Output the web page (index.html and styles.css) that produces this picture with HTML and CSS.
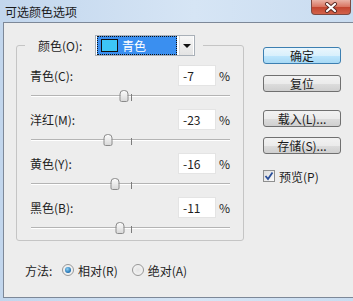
FILE: index.html
```html
<!DOCTYPE html>
<html lang="zh-CN">
<head>
    <meta charset="UTF-8">
    <title>可选颜色选项</title>
    <link rel="stylesheet" href="styles.css">
</head>
<body>
    <div class="window">
        <div class="titlebar">
            <span class="title">可选颜色选项</span>
            <span class="close">
                <svg width="16" height="11" viewBox="0 0 16 11">
                    <path d="M4 2 L12 9 M12 2 L4 9" stroke="#5a2a24" stroke-width="4" stroke-linecap="round"/>
                    <path d="M4 2 L12 9 M12 2 L4 9" stroke="#fff" stroke-width="2.2" stroke-linecap="round"/>
                </svg>
            </span>
        </div>
        <div class="client">
            <div class="main">
                <fieldset class="group">
                    <legend class="group-head">
                        <div class="head-inner">
                            <span class="head-label">颜色(O):</span>
                            <span class="select">
                                <span class="select-value"><span class="swatch"></span>青色</span>
                                <span class="select-arrow"></span>
                            </span>
                        </div>
                    </legend>

                    <div class="row">
                        <div class="row-top">
                            <span class="label">青色(C):</span>
                            <span class="field">-7</span>
                            <span class="pct">%</span>
                        </div>
                        <div class="slider">
                            <div class="track"><span class="tick"></span><span class="thumb" style="left: 46.5%"></span></div>
                        </div>
                    </div>

                    <div class="row">
                        <div class="row-top">
                            <span class="label">洋红(M):</span>
                            <span class="field">-23</span>
                            <span class="pct">%</span>
                        </div>
                        <div class="slider">
                            <div class="track"><span class="tick"></span><span class="thumb" style="left: 38.5%"></span></div>
                        </div>
                    </div>

                    <div class="row">
                        <div class="row-top">
                            <span class="label">黄色(Y):</span>
                            <span class="field">-16</span>
                            <span class="pct">%</span>
                        </div>
                        <div class="slider">
                            <div class="track"><span class="tick"></span><span class="thumb" style="left: 42%"></span></div>
                        </div>
                    </div>

                    <div class="row">
                        <div class="row-top">
                            <span class="label">黑色(B):</span>
                            <span class="field">-11</span>
                            <span class="pct">%</span>
                        </div>
                        <div class="slider">
                            <div class="track"><span class="tick"></span><span class="thumb" style="left: 44.5%"></span></div>
                        </div>
                    </div>
                </fieldset>

                <div class="method">
                    <span class="method-label">方法:</span>
                    <span class="radio checked"></span>
                    <span class="radio-text">相对(R)</span>
                    <span class="radio"></span>
                    <span class="radio-text">绝对(A)</span>
                </div>
            </div>

            <div class="side">
                <button class="btn default">确定</button>
                <button class="btn btn-reset">复位</button>
                <button class="btn btn-load">载入(L)...</button>
                <button class="btn btn-save">存储(S)...</button>
                <div class="preview">
                    <span class="checkbox">
                        <svg width="10" height="10" viewBox="0 0 10 10">
                            <path d="M1.5 5 L4 8 L8.5 1.5" fill="none" stroke="#2a4f9a" stroke-width="1.8"/>
                        </svg>
                    </span>
                    <span>预览(P)</span>
                </div>
            </div>
        </div>
    </div>
</body>
</html>
```

FILE: styles.css
```css
* {
    box-sizing: border-box;
}

body {
    margin: 0;
    font-family: "Noto Sans CJK SC", "Noto Sans", sans-serif;
    font-size: 12px;
    color: #1e1e1e;
}

/* Rahmen des Fensters */
.window {
    width: 353px;
    height: 301px;
    padding: 0 0 3px 3px;
    display: flex;
    flex-direction: column;
    background: linear-gradient(to right, #c2d6ed, #d6e5f5 55%, #c9dcf0);
}

.titlebar {
    height: 22px;
    flex-shrink: 0;
    display: flex;
    align-items: flex-start;
}

.title {
    padding: 4px 0 0 2px;
    line-height: 16px;
    color: #1a1a1a;
}

.close {
    margin-left: auto;
    margin-right: 2px;
    width: 40px;
    height: 15px;
    display: flex;
    align-items: center;
    justify-content: center;
    border: 1px solid #7e4a42;
    border-top: none;
    border-radius: 0 0 4px 4px;
    background: linear-gradient(#eab3a6, #d8735f 50%, #c2452f 51%, #d2624a);
}

.client {
    flex: 1;
    display: flex;
    background: #ededed;
    border: 1px solid #7d8898;
    border-right: none;
}

.main {
    width: 240px;
    padding: 12px 0 0 12px;
}

/* Gruppe */
.group {
    width: 228px;
    min-width: 0;
    margin: 0;
    padding: 9px 13px 0 13px;
    border: 1px solid #c5c5c5;
    border-radius: 3px;
}

.group-head {
    margin-left: -5px;
    padding: 0 8px 0 13px;
}

.head-inner {
    display: flex;
    align-items: center;
    height: 21px;
}

.head-label {
    width: 57px;
}

.select {
    display: flex;
    align-items: center;
    width: 100px;
    height: 21px;
    padding: 0 1px;
    background: #fff;
    border: 1px solid #a9b0b8;
}

.select-value {
    display: flex;
    align-items: center;
    width: 80px;
    height: 19px;
    padding-left: 3px;
    color: #fff;
    background: #3a8ff0;
    border: 1px dotted #111;
}

.swatch {
    width: 17px;
    height: 13px;
    margin-right: 4px;
    background: #3dc6f6;
    border: 1px solid #111;
}

.select-arrow {
    width: 14px;
    height: 19px;
    margin-left: 2px;
    display: flex;
    align-items: center;
    justify-content: center;
    background: linear-gradient(#f7f7f7, #e3e3e3);
    border-left: 1px solid #d8d8d8;
}

.select-arrow::after {
    content: "";
    border-left: 4px solid transparent;
    border-right: 4px solid transparent;
    border-top: 4px solid #111;
}

.row-top {
    display: flex;
    align-items: center;
    height: 21px;
}

.label {
    flex: 1;
}

.field {
    width: 38px;
    height: 21px;
    padding: 0 4px;
    line-height: 19px;
    background: #fff;
    border: 1px solid #e4e4e4;
}

.pct {
    width: 14px;
    text-align: right;
}

.slider {
    height: 23px;
    padding: 9px 0 0 1px;
}

.row:last-child .slider {
    height: 22px;
}

.track {
    position: relative;
    height: 2px;
    border-top: 1px solid #b4b4b4;
    border-bottom: 1px solid #fff;
}

.tick {
    position: absolute;
    left: 50%;
    top: -2px;
    width: 1px;
    height: 7px;
    background: #7c7c7c;
}

.thumb {
    position: absolute;
    top: -6px;
    width: 9px;
    height: 12px;
    transform: translateX(-50%);
    border: 1px solid #8a8a8a;
    border-radius: 4px 4px 2px 2px;
    background: linear-gradient(#fbfbfb, #d9d9d9);
}

/* Methode */
.method {
    display: flex;
    align-items: center;
    height: 18px;
    margin-top: 20px;
    padding-left: 9px;
}

.method-label {
    width: 37px;
}

.radio {
    width: 12px;
    height: 12px;
    margin-right: 4px;
    border: 1px solid #979797;
    border-radius: 50%;
    background: radial-gradient(circle, #e4e4e4, #f8f8f8);
    display: flex;
    align-items: center;
    justify-content: center;
}

.radio.checked::after {
    content: "";
    width: 6px;
    height: 6px;
    border-radius: 50%;
    background: radial-gradient(circle at 40% 35%, #8fd2f5, #1f6fb0 70%);
}

.radio-text {
    margin-right: 14px;
}

/* Knoepfe */
.side {
    padding: 24px 0 0 19px;
    display: flex;
    flex-direction: column;
    align-items: flex-start;
}

.btn {
    width: 78px;
    height: 17px;
    padding: 0;
    font: inherit;
    line-height: 15px;
    color: #1a1a1a;
    border: 1px solid #707070;
    border-radius: 3px;
    background: linear-gradient(#f2f2f2, #ebebeb 50%, #dddddd 51%, #cfcfcf);
}

.btn.default {
    border-color: #3c7fb1;
    background: linear-gradient(#eaf6fd, #d9f0fc 50%, #bee6fd 51%, #a7d9f5);
}

.btn-reset {
    margin-top: 11px;
}

.btn-load {
    margin-top: 18px;
}

.btn-save {
    margin-top: 10px;
}

.preview {
    display: flex;
    align-items: center;
    margin-top: 15px;
    height: 14px;
}

.checkbox {
    width: 12px;
    height: 12px;
    margin-right: 4px;
    display: flex;
    align-items: center;
    justify-content: center;
    border: 1px solid #8e8f8f;
    background: linear-gradient(135deg, #dcdcdc, #fbfbfb);
}
```
